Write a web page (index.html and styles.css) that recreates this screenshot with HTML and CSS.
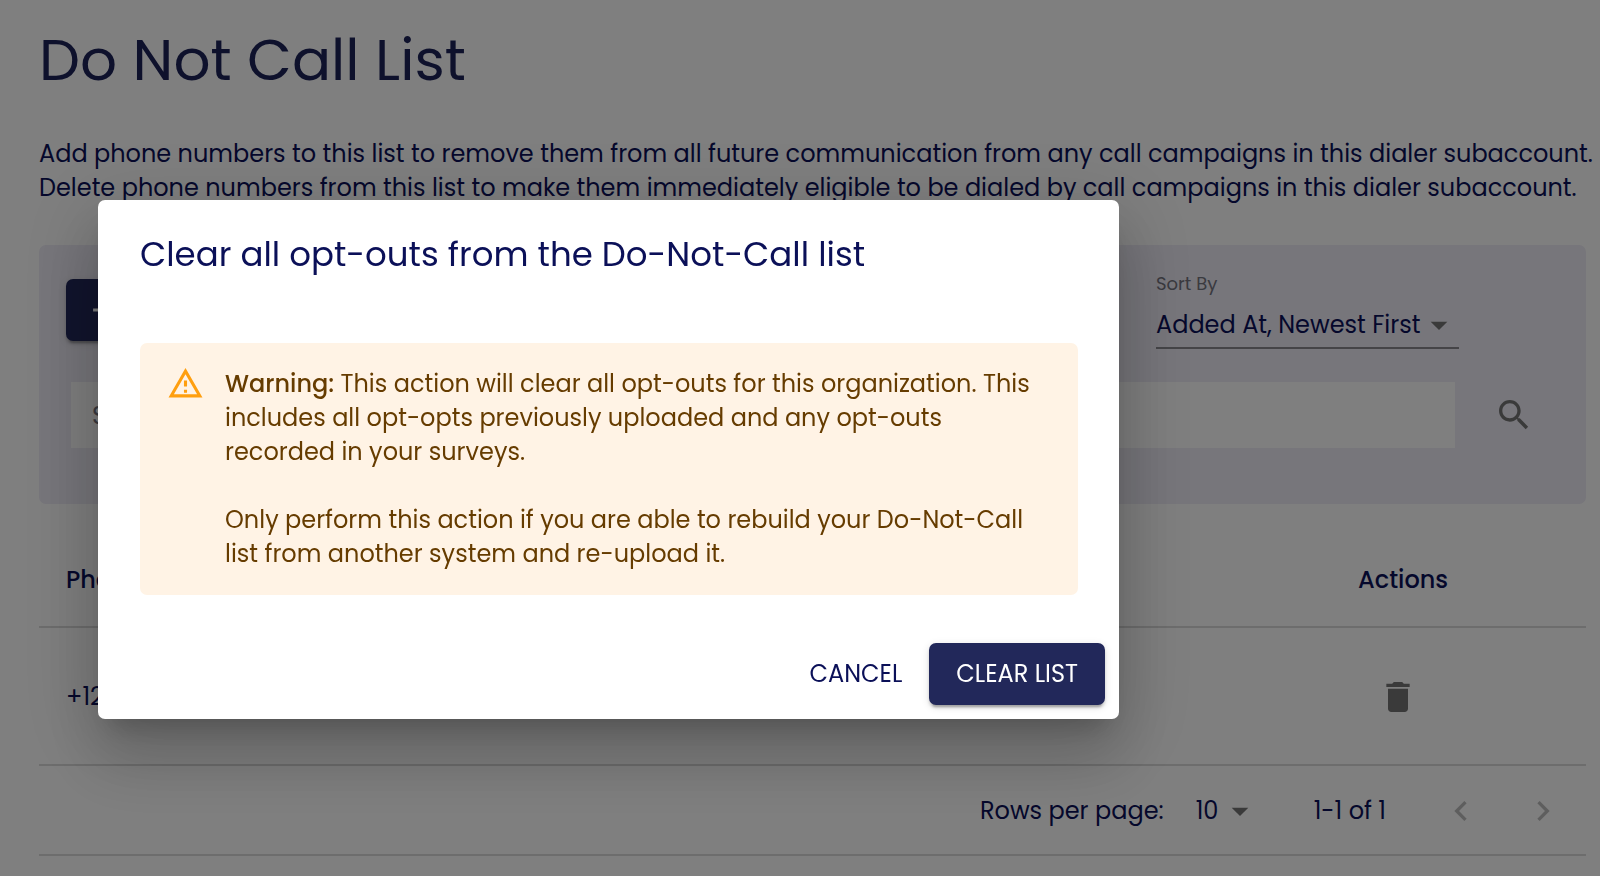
FILE: index.html
```html
<!DOCTYPE html>
<html lang="en">
<head>
<meta charset="utf-8">
<meta name="viewport" content="width=device-width, initial-scale=1">
<title>Do Not Call List</title>
<link rel="stylesheet" href="styles.css">
</head>
<body>
<main class="page">
  <h1 class="page-title">Do Not Call List</h1>
  <p class="intro">Add phone numbers to this list to remove them from all future communication from any call campaigns in this dialer subaccount.<br>Delete phone numbers from this list to make them immediately eligible to be dialed by call campaigns in this dialer subaccount.</p>

  <section class="toolbar">
    <div class="toolbar-row">
      <button class="btn btn-primary btn-add" type="button" aria-label="Add">
        <svg class="icon-add" viewBox="0 0 24 24" aria-hidden="true"><path d="M19 13h-6v6h-2v-6H5v-2h6V5h2v6h6v2z"/></svg>
      </button>
      <div class="field">
        <label class="field-label" for="sort">Sort By</label>
        <div class="select-wrap">
          <select class="select" id="sort"><option>Added At, Newest First</option></select>
          <svg class="select-arrow" viewBox="0 0 24 24" aria-hidden="true"><path d="M7 10l5 5 5-5z"/></svg>
        </div>
      </div>
    </div>
    <form class="search">
      <input class="search-input" type="text" placeholder="Search" aria-label="Search">
      <button class="icon-btn" type="button" aria-label="Search">
        <svg class="icon" viewBox="0 0 24 24" aria-hidden="true"><path d="M15.5 14h-.79l-.28-.27C15.41 12.59 16 11.11 16 9.5 16 5.91 13.09 3 9.5 3S3 5.91 3 9.5 5.91 16 9.5 16c1.61 0 3.09-.59 4.23-1.57l.27.28v.79l5 4.99L20.49 19l-4.99-5zm-6 0C7.01 14 5 11.99 5 9.5S7.01 5 9.5 5 14 7.01 14 9.5 11.99 14 9.5 14z"/></svg>
      </button>
    </form>
  </section>

  <table class="table">
    <thead>
      <tr><th scope="col">Phone</th><th class="col-actions" scope="col">Actions</th></tr>
    </thead>
    <tbody>
      <tr>
        <td>+12</td>
        <td class="col-actions">
          <button class="icon-btn icon-btn-row" type="button" aria-label="Delete">
            <svg class="icon" viewBox="0 0 24 24" aria-hidden="true"><path d="M6 19c0 1.1.9 2 2 2h8c1.1 0 2-.9 2-2V7H6v12zM19 4h-3.5l-1-1h-5l-1 1H5v2h14V4z"/></svg>
          </button>
        </td>
      </tr>
    </tbody>
  </table>

  <div class="pagination">
    <label class="rows-label" for="rows">Rows per page:</label>
    <div class="select-wrap rows-wrap">
      <select class="select select-rows" id="rows"><option>10</option></select>
      <svg class="select-arrow" viewBox="0 0 24 24" aria-hidden="true"><path d="M7 10l5 5 5-5z"/></svg>
    </div>
    <span class="range">1-1 of 1</span>
    <button class="page-btn" type="button" aria-label="Previous page" disabled>
      <svg class="icon" viewBox="0 0 24 24" aria-hidden="true"><path d="M15.41 7.41L14 6l-6 6 6 6 1.41-1.41L10.83 12z"/></svg>
    </button>
    <button class="page-btn" type="button" aria-label="Next page" disabled>
      <svg class="icon" viewBox="0 0 24 24" aria-hidden="true"><path d="M10 6L8.59 7.41 13.17 12l-4.58 4.59L10 18l6-6z"/></svg>
    </button>
  </div>
</main>

<div class="backdrop">
  <div class="dialog" role="dialog" aria-modal="true" aria-labelledby="dialog-title">
    <h2 class="dialog-title" id="dialog-title">Clear all opt-outs from the Do-Not-Call list</h2>
    <div class="alert" role="alert">
      <svg class="alert-icon" viewBox="0 0 24 24" aria-hidden="true"><path d="M12 5.99L19.53 19H4.47L12 5.99M12 2L1 21h22L12 2zm1 14h-2v2h2v-2zm0-6h-2v4h2v-4z"/></svg>
      <div class="alert-text">
        <p><strong>Warning:</strong> This action will clear all opt-outs for this organization. This<br>includes all opt-opts previously uploaded and any opt-outs<br>recorded in your surveys.</p>
        <p>Only perform this action if you are able to rebuild your Do-Not-Call<br>list from another system and re-upload it.</p>
      </div>
    </div>
    <div class="dialog-actions">
      <button class="btn btn-text" type="button">CANCEL</button>
      <button class="btn btn-primary" type="button">CLEAR LIST</button>
    </div>
  </div>
</div>
</body>
</html>
```
FILE: styles.css
```css
* { box-sizing: border-box; }

body {
  margin: 0;
  min-height: 100vh;
  background: #fff;
  color: #0b1058;
  font-family: Poppins, Inter, "Open Sans", sans-serif;
  font-size: 24px;
  line-height: 34px;
}

h1, h2, p { margin: 0; font-weight: 400; }

button, input, select {
  font: inherit;
  color: inherit;
  border: 0;
  border-radius: 0;
  background: none;
  padding: 0;
  margin: 0;
}

.page { padding: 26px 14px 0 39px; }

.page-title {
  font-size: 58px;
  line-height: 68px;
  color: #1c2258;
}

.intro { margin-top: 43px; white-space: nowrap; }

.toolbar {
  display: flex;
  flex-direction: column;
  gap: 33px;
  margin-top: 40px;
  padding: 25px 26px 56px 27px;
  border-radius: 7px;
  background: #eeecf6;
}

.toolbar-row {
  display: flex;
  align-items: center;
  justify-content: space-between;
  padding-right: 101px;
}

.btn {
  height: 62px;
  padding: 0 14px;
  border-radius: 7px;
  white-space: nowrap;
}

.btn-primary {
  padding: 0 27px;
  background: #22285a;
  color: #fff;
  box-shadow: 0 5px 2px -3px rgba(0, 0, 0, .2), 0 3px 3px rgba(0, 0, 0, .14), 0 2px 8px rgba(0, 0, 0, .12);
}

.btn-add { padding: 0 20px; }

.icon-add { display: block; width: 34px; fill: currentColor; }

.field { width: 303px; }

.field-label {
  display: block;
  font-size: 18px;
  line-height: 28px;
  color: #75747f;
}

.select-wrap { position: relative; }

.select {
  appearance: none;
  display: block;
  width: 100%;
  height: 51px;
  padding: 4px 32px 0 0;
  border-bottom: 2px solid #8a898f;
}

.select-arrow {
  position: absolute;
  top: 7px;
  right: 0;
  width: 40px;
  height: 40px;
  fill: #757575;
  pointer-events: none;
}

.search {
  display: flex;
  align-items: center;
  gap: 25px;
  padding: 0 12px 0 5px;
}

.search-input {
  flex: 1;
  min-width: 0;
  height: 66px;
  padding: 0 21px;
  background: #fff;
}

.search-input::placeholder { color: #75747f; opacity: 1; }

.icon-btn {
  display: grid;
  place-items: center;
  width: 68px;
  height: 66px;
  color: #757575;
}

.icon-btn-row { width: 80px; }

.icon { display: block; width: 40px; height: 40px; fill: currentColor; }

.table {
  width: 100%;
  margin-top: 28px;
  border-collapse: separate;
  border-spacing: 0;
  table-layout: fixed;
}

.table th, .table td {
  height: 96px;
  padding: 2px 27px 0;
  border-bottom: 2px solid #dadada;
  text-align: left;
  font-weight: 400;
}

.table th { font-weight: 500; }

.table td { height: 138px; }

.table .col-actions { width: 255px; }

.pagination {
  display: flex;
  align-items: center;
  justify-content: flex-end;
  height: 90px;
  padding: 2px 2px 0 0;
  border-bottom: 2px solid #dadada;
}

.rows-wrap { width: 64px; margin: 0 54px 0 32px; }

.select-rows { height: 40px; padding: 0; border: 0; }

.rows-wrap .select-arrow { top: 0; }

.range { margin-right: 34px; }

.page-btn {
  display: grid;
  place-items: center;
  width: 82px;
  height: 66px;
  color: #bdbdbd;
}

.backdrop {
  position: fixed;
  inset: 0;
  display: flex;
  align-items: flex-start;
  padding: 200px 40px 0 98px;
  background: rgba(0, 0, 0, .5);
}

.dialog {
  flex: 1;
  max-width: 1021px;
  padding: 27px 14px 14px 42px;
  border-radius: 7px;
  background: #fff;
  box-shadow: 0 18px 25px -12px rgba(0, 0, 0, .2), 0 40px 64px 5px rgba(0, 0, 0, .14), 0 15px 78px 14px rgba(0, 0, 0, .12);
}

.dialog-title { font-size: 34px; line-height: 54px; }

.alert {
  display: flex;
  gap: 21px;
  margin: 62px 27px 48px 0;
  padding: 22px 27px 24px;
  border-radius: 7px;
  background: #fff3e5;
  color: #663c00;
}

.alert-icon { flex: none; width: 37px; height: 37px; fill: #ff9f0f; }

.alert-text { display: grid; gap: 34px; padding-top: 2px; }

.alert strong { font-weight: 500; }

.dialog-actions { display: flex; justify-content: flex-end; gap: 13px; }
```
